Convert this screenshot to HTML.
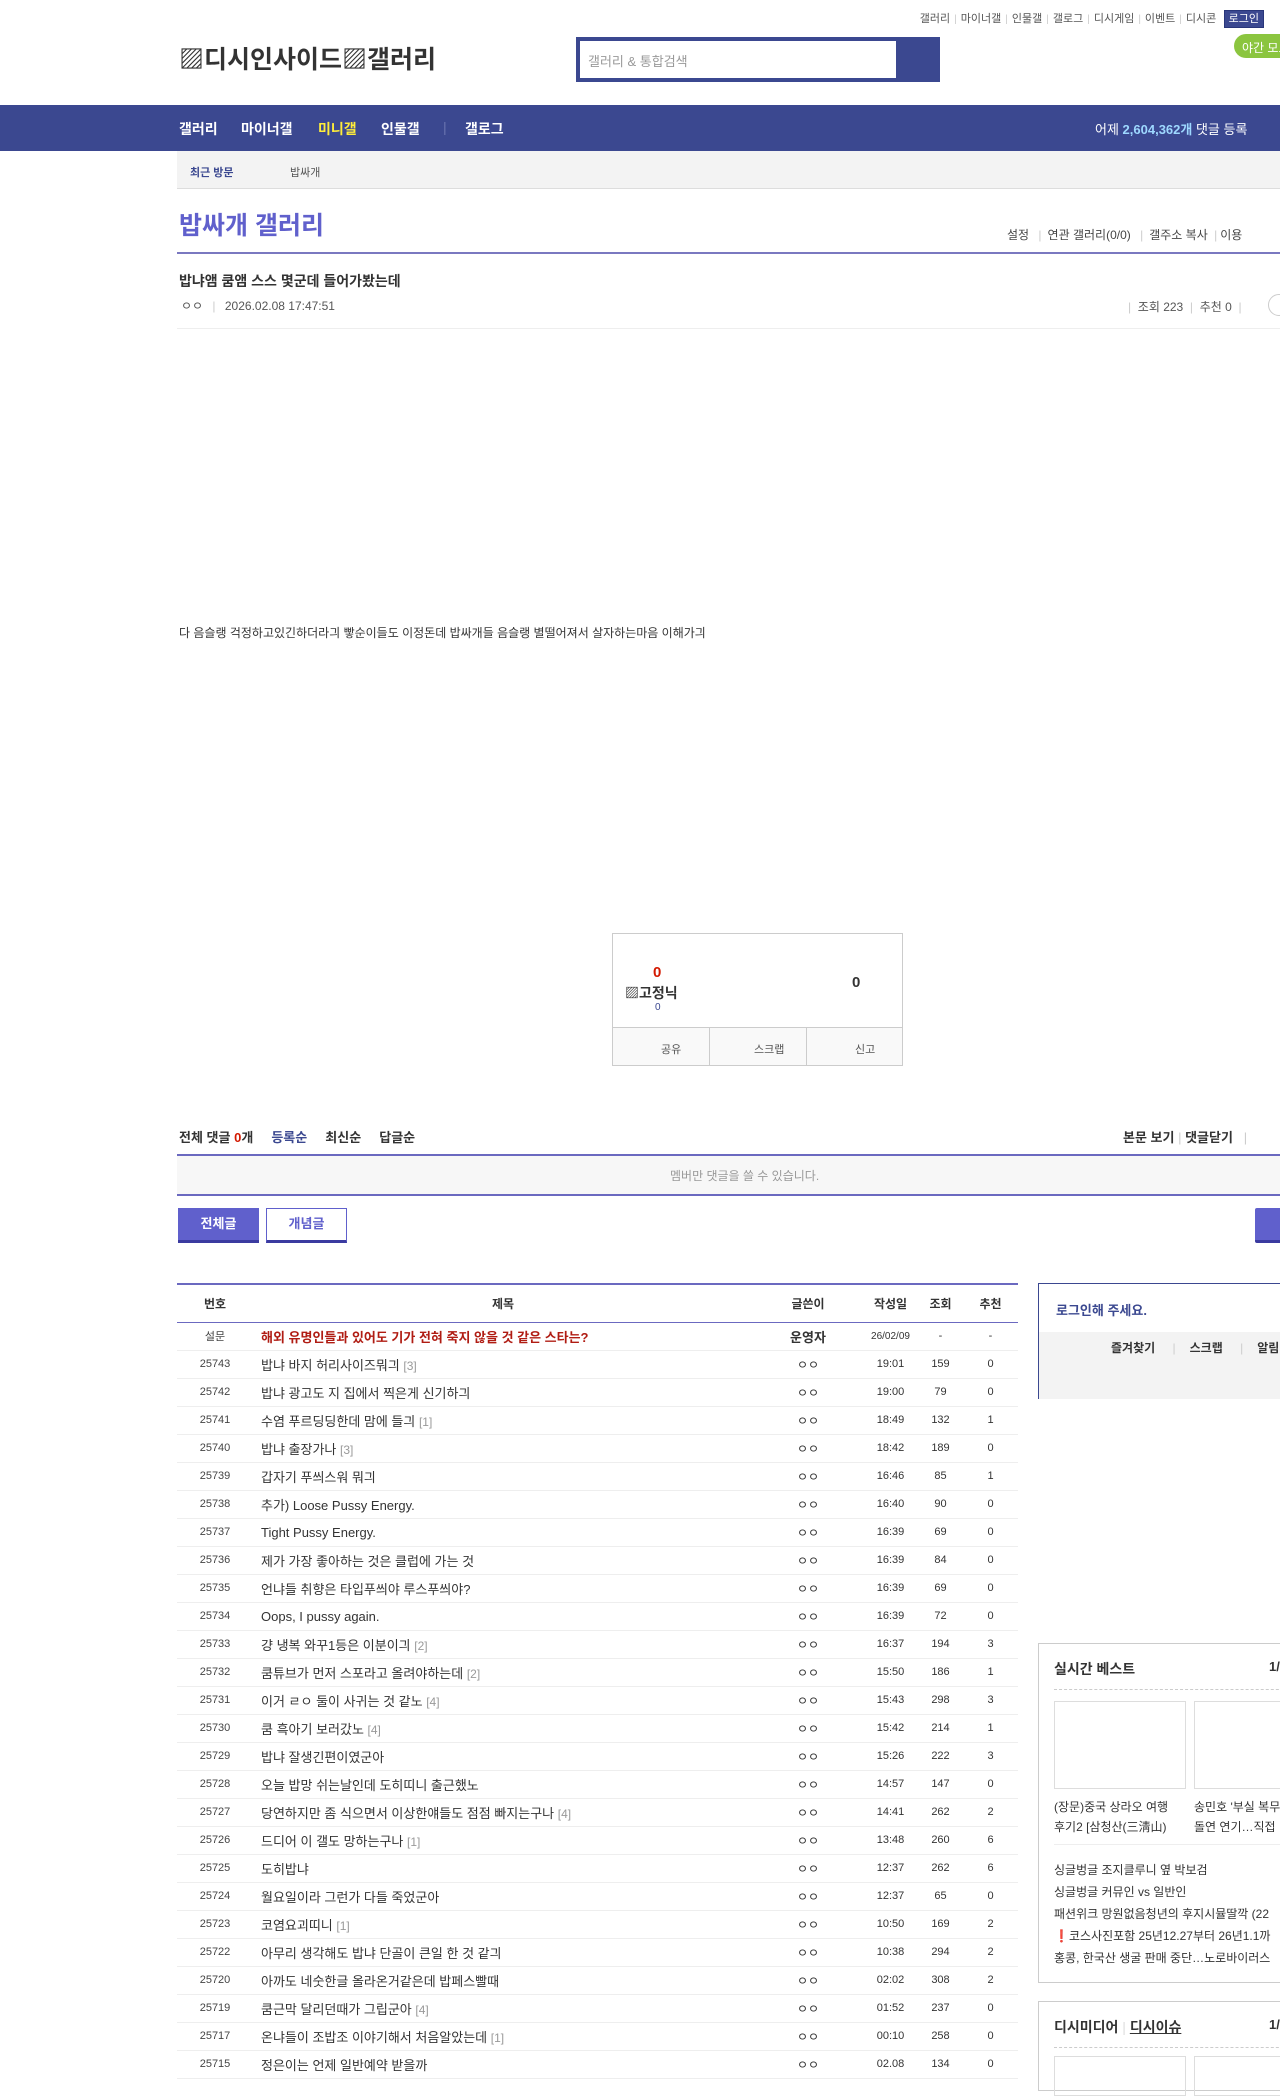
<!DOCTYPE html>
<html><head><meta charset="utf-8"><style>
*{margin:0;padding:0;box-sizing:border-box}
body{width:1280px;height:2076px;overflow:hidden;background:#fff;font-family:"Liberation Sans","Noto Sans CJK KR",sans-serif;color:#333;font-size:12px;position:relative}
.a{position:absolute;white-space:nowrap}
.top a{color:#555;font-size:11px;text-decoration:none}
.top span{color:#ccc;margin:0 4px;font-size:10px}
.nav{position:absolute;left:0;top:105px;width:1280px;height:46px;background:#3b4890}
.nav .a{color:#fff;font-weight:bold;font-size:14px;top:14px}
table{border-collapse:collapse;position:absolute;left:177px;top:1283px;width:841px;border-top:2px solid #6b69c0}
td,th{height:28px;font-size:12px;border-bottom:1px solid #eee;text-align:center;color:#333}
th{height:38px;font-size:12px;border-bottom:1px solid #6b69c0;font-weight:bold}
td.t{text-align:left;padding-left:8px;font-size:13px}
td.n{font-size:11px;color:#444}
td.d,td.v{font-size:11px}
.r{color:#999;font-size:12px}
.side{position:absolute;border:1px solid #ccc;left:1038px;width:260px}
</style></head><body>
<div class="a top" style="right:16px;top:10px"><a>갤러리</a><span>|</span><a>마이너갤</a><span>|</span><a>인물갤</a><span>|</span><a>갤로그</a><span>|</span><a>디시게임</a><span>|</span><a>이벤트</a><span>|</span><a>디시콘</a> <a style="background:#3b4890;color:#fff;border:1px solid #29367a;padding:2px 4px;margin-left:4px">로그인</a></div>
<div class="a" style="left:1234px;top:34px;width:60px;height:24px;background:#8bc53f;border-radius:12px;color:#fff;font-size:12px;padding:5px 8px">야간 모드</div>
<div class="a" style="left:179px;top:40px;font-size:25px;font-weight:bold;color:#333">▨디시인사이드▨갤러리</div>
<div class="a" style="left:576px;top:37px;width:364px;height:45px;background:#3b4890"></div>
<div class="a" style="left:580px;top:41px;width:316px;height:37px;background:#fff;color:#999;font-size:13px;padding:10px 8px">갤러리 &amp; 통합검색</div>
<div class="nav">
<div class="a" style="left:179px">갤러리</div><div class="a" style="left:241px">마이너갤</div><div class="a" style="left:318px;color:#ffed3a">미니갤</div><div class="a" style="left:381px">인물갤</div><div class="a" style="left:443px;color:#6a74b0;font-weight:normal">|</div><div class="a" style="left:465px">갤로그</div>
<div class="a" style="left:1095px;font-weight:normal;font-size:13px">어제 <b style="color:#9ed8ff">2,604,362개</b> 댓글 등록</div>
</div>
<div class="a" style="left:177px;top:151px;width:1110px;height:38px;background:#f3f3f3;border-bottom:1px solid #ddd"></div>
<div class="a" style="left:190px;top:164px;font-size:11px;color:#3b4890;font-weight:bold">최근 방문</div>
<div class="a" style="left:290px;top:164px;font-size:11px;color:#555">밥싸개</div>
<div class="a" style="left:179px;top:206px;font-size:25px;font-weight:bold;color:#6060cc">밥싸개 갤러리</div>
<div class="a" style="left:1007px;top:226px;font-size:12px;color:#444">설정 <span style="color:#ccc;margin:0 6px">|</span>연관 갤러리(0/0) <span style="color:#ccc;margin:0 6px">|</span>갤주소 복사 <span style="color:#ccc;margin:0 3px">|</span>이용</div>
<div class="a" style="left:177px;top:252px;width:1110px;height:2px;background:#7a78c0"></div>
<div class="a" style="left:179px;top:271px;font-size:14px;font-weight:bold;color:#333">밥냐앰 쿰앰 스스 몇군데 들어가봤는데</div>
<div class="a" style="left:181px;top:297px;font-size:12px;color:#555">ㅇㅇ <span style="color:#ccc;margin:0 6px">|</span> 2026.02.08 17:47:51</div>
<div class="a" style="left:1128px;top:298px;font-size:12px;color:#555"><span style="color:#ccc">|</span>&nbsp; 조회 223 &nbsp;<span style="color:#ccc">|</span>&nbsp; 추천 0 &nbsp;<span style="color:#ccc">|</span></div>
<div class="a" style="left:1268px;top:294px;width:22px;height:22px;border:1px solid #ccc;border-radius:50%"></div>
<div class="a" style="left:177px;top:328px;width:1110px;height:1px;background:#eee"></div>
<div class="a" style="left:179px;top:624px;font-size:12px;color:#333">다 음슬랭 걱정하고있긴하더라긔 빻순이들도 이정돈데 밥싸개들 음슬랭 별떨어져서 살자하는마음 이해가긔</div>
<div class="a" style="left:612px;top:933px;width:291px;height:133px;border:1px solid #ccc"></div>
<div class="a" style="left:612px;top:1027px;width:291px;height:1px;background:#ccc"></div>
<div class="a" style="left:709px;top:1027px;width:1px;height:39px;background:#ccc"></div>
<div class="a" style="left:806px;top:1027px;width:1px;height:39px;background:#ccc"></div>
<div class="a" style="left:613px;top:1028px;width:289px;height:37px;background:#f9f9f9;z-index:-1"></div>
<div class="a" style="left:653px;top:964px;color:#d31900;font-weight:bold;font-size:15px">0</div>
<div class="a" style="left:625px;top:983px;color:#333;font-weight:bold;font-size:14px">▨고정닉</div>
<div class="a" style="left:655px;top:1002px;color:#3b4890;font-size:10px">0</div>
<div class="a" style="left:852px;top:974px;color:#333;font-weight:bold;font-size:15px">0</div>
<div class="a" style="left:661px;top:1041px;font-size:11px;color:#555">공유</div>
<div class="a" style="left:754px;top:1041px;font-size:11px;color:#555">스크랩</div>
<div class="a" style="left:855px;top:1041px;font-size:11px;color:#555">신고</div>
<div class="a" style="left:179px;top:1127px;font-size:13px;font-weight:bold;color:#333">전체 댓글 <span style="color:#d31900">0</span>개 &nbsp;&nbsp;&nbsp;&nbsp;<span style="color:#3b4890">등록순</span> &nbsp;&nbsp;&nbsp;&nbsp;최신순 &nbsp;&nbsp;&nbsp;&nbsp;답글순</div>
<div class="a" style="left:1123px;top:1127px;font-size:13px;font-weight:bold;color:#333">본문 보기 <span style="color:#ccc;font-weight:normal">|</span> 댓글닫기 &nbsp;&nbsp;<span style="color:#ccc;font-weight:normal">|</span></div>
<div class="a" style="left:177px;top:1154px;width:1110px;height:42px;background:#f7f7f7;border-top:2px solid #6b69c0;border-bottom:2px solid #6b69c0"></div>
<div class="a" style="left:670px;top:1167px;font-size:12px;color:#999">멤버만 댓글을 쓸 수 있습니다.</div>
<div class="a" style="left:178px;top:1208px;width:81px;height:35px;background:#6060cc;border-bottom:3px solid #3b3ba0;color:#fff;font-weight:bold;font-size:13px;text-align:center;line-height:32px">전체글</div>
<div class="a" style="left:266px;top:1208px;width:81px;height:35px;background:#fff;border:1px solid #6060cc;border-bottom:3px solid #3b3ba0;color:#6060cc;font-weight:bold;font-size:13px;text-align:center;line-height:30px">개념글</div>
<div class="a" style="left:1255px;top:1208px;width:60px;height:35px;background:#6060cc;border-bottom:3px solid #3b3ba0;border-radius:2px"></div>
<table>
<tr><th style="width:76px">번호</th><th>제목</th><th style="width:110px">글쓴이</th><th style="width:55px">작성일</th><th style="width:45px">조회</th><th style="width:55px">추천</th></tr>
<tr><td class="n">설문</td><td class="t" style="color:#b01c13;font-weight:bold">해외 유명인들과 있어도 기가 전혀 죽지 않을 것 같은 스타는?</td><td style="font-weight:bold;font-size:13px">운영자</td><td class="d" style="font-size:10px">26/02/09</td><td class="v">-</td><td class="v">-</td></tr>
<tr><td class="n">25743</td><td class="t">밥냐 바지 허리사이즈뭐긔 <span class="r">[3]</span></td><td>ㅇㅇ</td><td class="d">19:01</td><td class="v">159</td><td class="v">0</td></tr>
<tr><td class="n">25742</td><td class="t">밥냐 광고도 지 집에서 찍은게 신기하긔</td><td>ㅇㅇ</td><td class="d">19:00</td><td class="v">79</td><td class="v">0</td></tr>
<tr><td class="n">25741</td><td class="t">수염 푸르딩딩한데 맘에 들긔 <span class="r">[1]</span></td><td>ㅇㅇ</td><td class="d">18:49</td><td class="v">132</td><td class="v">1</td></tr>
<tr><td class="n">25740</td><td class="t">밥냐 출장가나 <span class="r">[3]</span></td><td>ㅇㅇ</td><td class="d">18:42</td><td class="v">189</td><td class="v">0</td></tr>
<tr><td class="n">25739</td><td class="t">갑자기 푸씌스워 뭐긔</td><td>ㅇㅇ</td><td class="d">16:46</td><td class="v">85</td><td class="v">1</td></tr>
<tr><td class="n">25738</td><td class="t">추가) Loose Pussy Energy.</td><td>ㅇㅇ</td><td class="d">16:40</td><td class="v">90</td><td class="v">0</td></tr>
<tr><td class="n">25737</td><td class="t">Tight Pussy Energy.</td><td>ㅇㅇ</td><td class="d">16:39</td><td class="v">69</td><td class="v">0</td></tr>
<tr><td class="n">25736</td><td class="t">제가 가장 좋아하는 것은 클럽에 가는 것</td><td>ㅇㅇ</td><td class="d">16:39</td><td class="v">84</td><td class="v">0</td></tr>
<tr><td class="n">25735</td><td class="t">언냐들 취향은 타입푸씌야 루스푸씌야?</td><td>ㅇㅇ</td><td class="d">16:39</td><td class="v">69</td><td class="v">0</td></tr>
<tr><td class="n">25734</td><td class="t">Oops, I pussy again.</td><td>ㅇㅇ</td><td class="d">16:39</td><td class="v">72</td><td class="v">0</td></tr>
<tr><td class="n">25733</td><td class="t">걍 냉복 와꾸1등은 이분이긔 <span class="r">[2]</span></td><td>ㅇㅇ</td><td class="d">16:37</td><td class="v">194</td><td class="v">3</td></tr>
<tr><td class="n">25732</td><td class="t">쿰튜브가 먼저 스포라고 올려야하는데 <span class="r">[2]</span></td><td>ㅇㅇ</td><td class="d">15:50</td><td class="v">186</td><td class="v">1</td></tr>
<tr><td class="n">25731</td><td class="t">이거 ㄹㅇ 둘이 사귀는 것 같노 <span class="r">[4]</span></td><td>ㅇㅇ</td><td class="d">15:43</td><td class="v">298</td><td class="v">3</td></tr>
<tr><td class="n">25730</td><td class="t">쿰 흑아기 보러갔노 <span class="r">[4]</span></td><td>ㅇㅇ</td><td class="d">15:42</td><td class="v">214</td><td class="v">1</td></tr>
<tr><td class="n">25729</td><td class="t">밥냐 잘생긴편이였군아</td><td>ㅇㅇ</td><td class="d">15:26</td><td class="v">222</td><td class="v">3</td></tr>
<tr><td class="n">25728</td><td class="t">오늘 밥망 쉬는날인데 도히띠니 출근했노</td><td>ㅇㅇ</td><td class="d">14:57</td><td class="v">147</td><td class="v">0</td></tr>
<tr><td class="n">25727</td><td class="t">당연하지만 좀 식으면서 이상한얘들도 점점 빠지는구나 <span class="r">[4]</span></td><td>ㅇㅇ</td><td class="d">14:41</td><td class="v">262</td><td class="v">2</td></tr>
<tr><td class="n">25726</td><td class="t">드디어 이 갤도 망하는구나 <span class="r">[1]</span></td><td>ㅇㅇ</td><td class="d">13:48</td><td class="v">260</td><td class="v">6</td></tr>
<tr><td class="n">25725</td><td class="t">도히밥냐</td><td>ㅇㅇ</td><td class="d">12:37</td><td class="v">262</td><td class="v">6</td></tr>
<tr><td class="n">25724</td><td class="t">월요일이라 그런가 다들 죽었군아</td><td>ㅇㅇ</td><td class="d">12:37</td><td class="v">65</td><td class="v">0</td></tr>
<tr><td class="n">25723</td><td class="t">코염요괴띠니 <span class="r">[1]</span></td><td>ㅇㅇ</td><td class="d">10:50</td><td class="v">169</td><td class="v">2</td></tr>
<tr><td class="n">25722</td><td class="t">아무리 생각해도 밥냐 단골이 큰일 한 것 같긔</td><td>ㅇㅇ</td><td class="d">10:38</td><td class="v">294</td><td class="v">2</td></tr>
<tr><td class="n">25720</td><td class="t">아까도 네숫한글 올라온거같은데 밥페스빨때</td><td>ㅇㅇ</td><td class="d">02:02</td><td class="v">308</td><td class="v">2</td></tr>
<tr><td class="n">25719</td><td class="t">쿰근막 달리던때가 그립군아 <span class="r">[4]</span></td><td>ㅇㅇ</td><td class="d">01:52</td><td class="v">237</td><td class="v">0</td></tr>
<tr><td class="n">25717</td><td class="t">온냐들이 조밥조 이야기해서 처음알았는데 <span class="r">[1]</span></td><td>ㅇㅇ</td><td class="d">00:10</td><td class="v">258</td><td class="v">0</td></tr>
<tr><td class="n">25715</td><td class="t">정은이는 언제 일반예약 받을까</td><td>ㅇㅇ</td><td class="d">02.08</td><td class="v">134</td><td class="v">0</td></tr>
</table>
<div class="side" style="top:1283px;height:116px;border:1px solid #3b4890">
<div class="a" style="left:17px;top:16px;font-size:13px;font-weight:bold;color:#3b4890">로그인해 주세요.</div>
<div class="a" style="left:0;top:48px;width:260px;height:67px;background:#f3f3f3"></div>
<div class="a" style="left:72px;top:55px;font-size:12px;font-weight:bold;color:#333">즐겨찾기 <span style="color:#ccc;font-weight:normal;margin:0 14px">|</span>스크랩 <span style="color:#ccc;font-weight:normal;margin:0 14px">|</span>알림</div>
</div>
<div class="side" style="top:1643px;height:340px">
<div class="a" style="left:15px;top:15px;font-size:14px;font-weight:bold;color:#333">실시간 베스트</div>
<div class="a" style="left:230px;top:15px;font-size:13px;font-weight:bold">1/4</div>
<div class="a" style="left:15px;top:45px;width:245px;border-top:1px dashed #ccc"></div>
<div class="a" style="left:15px;top:57px;width:132px;height:88px;border:1px solid #ddd"></div>
<div class="a" style="left:155px;top:57px;width:132px;height:88px;border:1px solid #ddd"></div>
<div class="a" style="left:15px;top:153px;font-size:12px;line-height:20px;color:#333">(장문)중국 상라오 여행<br>후기2 [삼청산(三淸山)</div>
<div class="a" style="left:155px;top:153px;font-size:12px;line-height:20px;color:#333">송민호 '부실 복무<br>돌연 연기…직접</div>
<div class="a" style="left:15px;top:200px;width:245px;border-top:1px solid #eee"></div>
<div class="a" style="left:15px;top:215px;font-size:12px;line-height:22px;color:#333">싱글벙글 조지클루니 옆 박보검<br>싱글벙글 커뮤인 vs 일반인<br>패션위크 망원없음청년의 후지시뮬딸깍 (22<br><span style="color:#e02020">❗</span>코스사진포함 25년12.27부터 26년1.1까<br>홍콩, 한국산 생굴 판매 중단…노로바이러스</div>
</div>
<div class="side" style="top:2001px;height:90px">
<div class="a" style="left:15px;top:15px;font-size:14px;font-weight:bold;color:#333">디시미디어 <span style="color:#ddd;font-weight:normal">|</span> <u>디시이슈</u></div>
<div class="a" style="left:230px;top:15px;font-size:13px;font-weight:bold">1/3</div>
<div class="a" style="left:15px;top:45px;width:245px;border-top:1px dashed #ccc"></div>
<div class="a" style="left:15px;top:54px;width:132px;height:40px;border:1px solid #ddd"></div>
<div class="a" style="left:155px;top:54px;width:132px;height:40px;border:1px solid #ddd"></div>
</div>
</body></html>
